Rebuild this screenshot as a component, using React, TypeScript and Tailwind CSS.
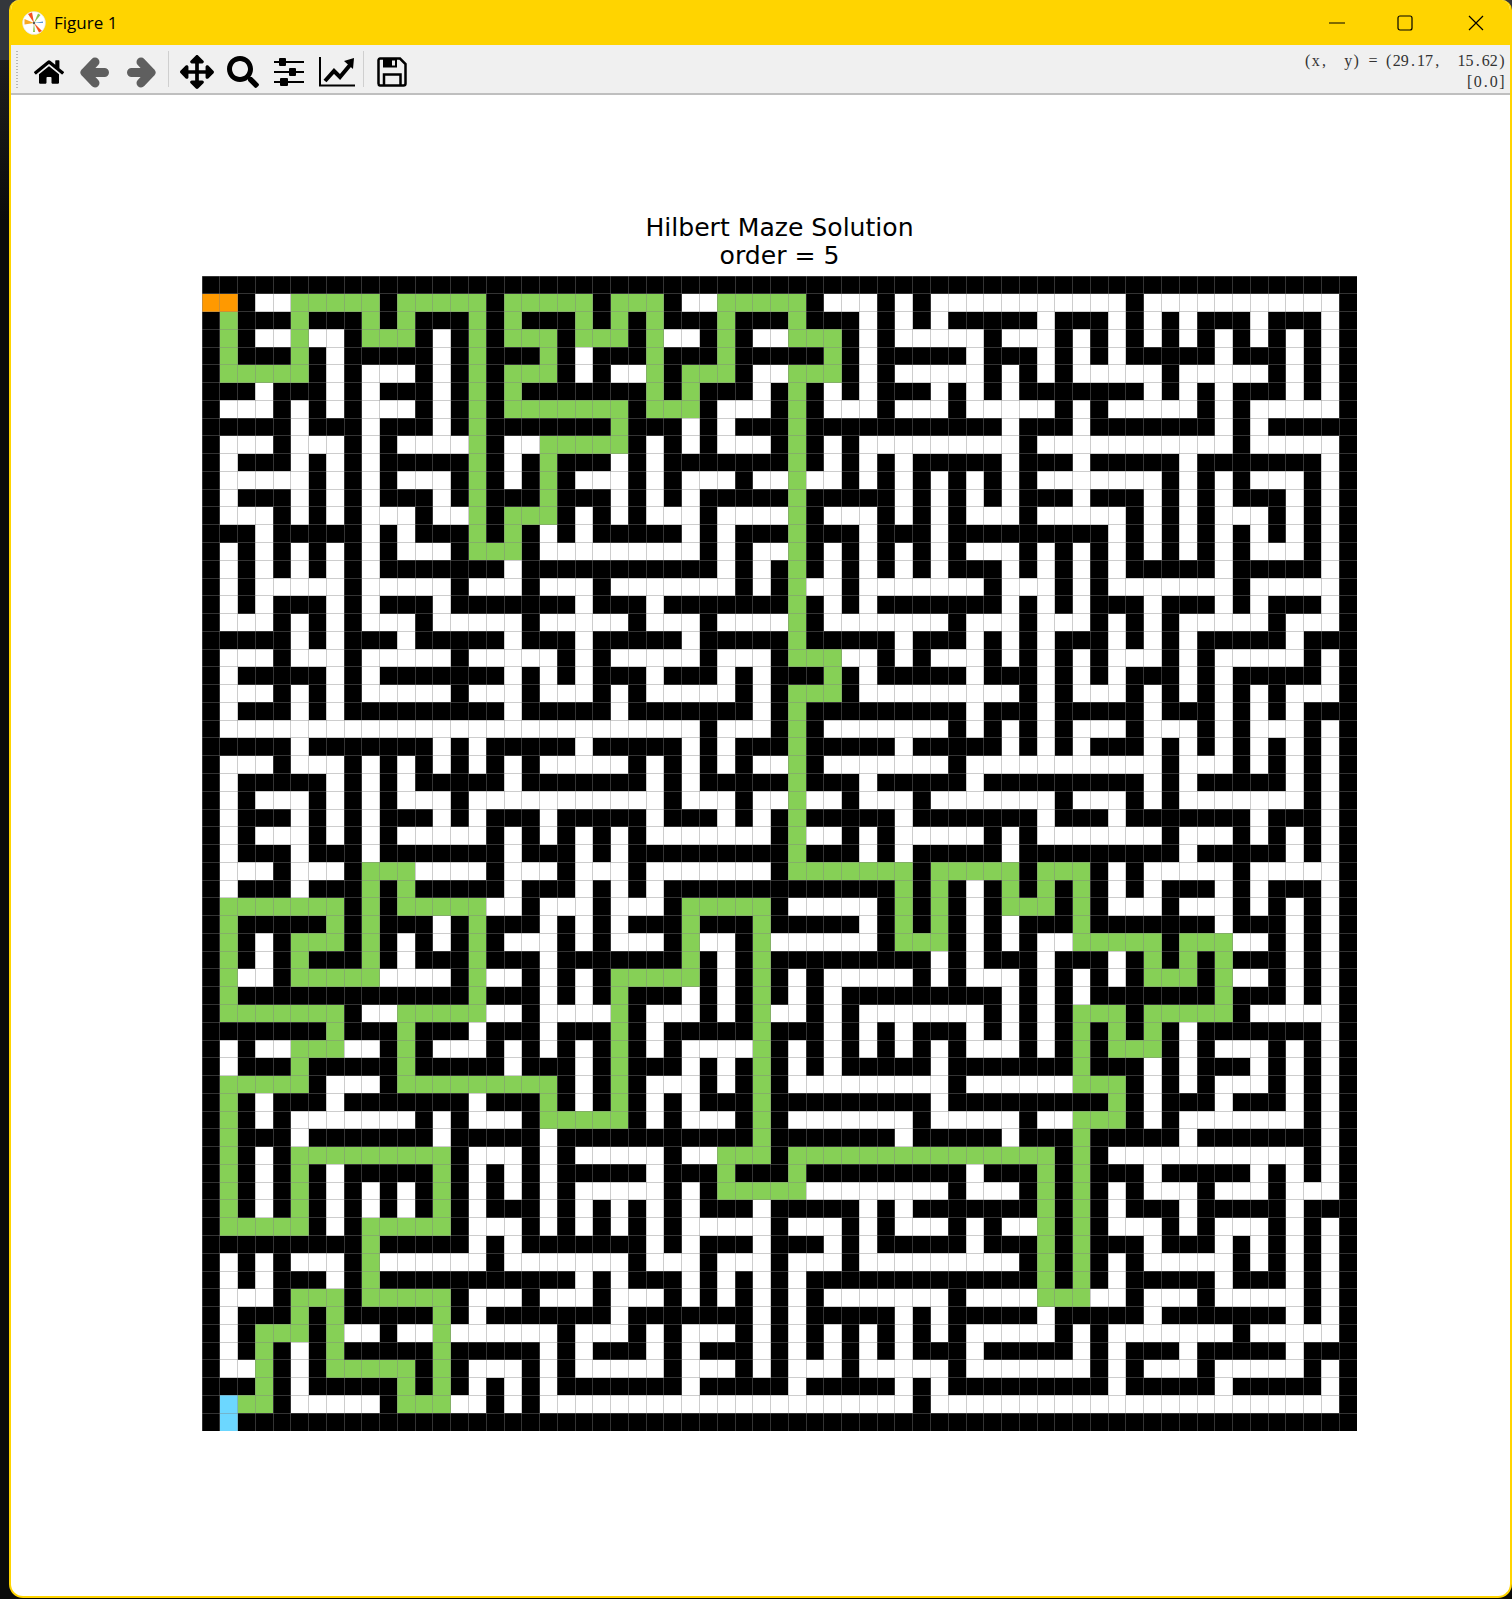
import type { ReactNode } from "react";
import { FaArrowsAlt, FaHome, FaSearch } from "react-icons/fa";

// maze cells, 65x65: # wall, . open, G solution, O start, B end
const WALL_ROW = "#".repeat(65);
const MAZE = [
  WALL_ROW,
  "OO#..GGGGG#GGGGG#GGGGG #GGG#..GGGGG#...#.#... ........#...........#",
  "#G###G###G#G###G#G###G #G#G###G###G###.#.#.## ###.###.#.#.###.###.#",
  "#G#..G..#GGG#.#G#GGG#G GG#G..#G#..GGG#.#..... #...#.#.#.#.#.#.#.#.#",
  "#G###G#.#####.#G###G#. ###G###G#####G#.#####. ###.#.#.#####.###.#.#",
  "#GGGGG#.#...#.#G#GGG#. #..G#GGG#..GGG#.#..... #.#.#.....#.....#.#.#",
  "###.###.#.###.#G#G#### ###G#G###.#G#.#.###.#. #.#######.#.#.###.#.#",
  "#...#.#.#...#.#G#GGGGG GG#GGG#...#G#...#...#. ....#.#.....#.#.....#",
  "#####.###.###.#G###### #G###.#.###G########## #.###.#######.#.#####",
  "#...#...#.#....G#..GGG GG#.#.#...#G#.#....... ..#...........#.....#",
  "#.###.#.#.#####G#.#G## #.#.#######G#.#.#.#### #.###.#####.#######.#",
  "#.....#.#.#...#G#.#G#. ..#.#...#..G..#.#.#.#. #.#.......#.#.#...#.#",
  "#.###.#.#.###.#G###G## #.#.#.#####G#####.#.#. #.###.###.#.#.###.#.#",
  "#...#.#.#...#..G#GGG#. #.#...#....G#...#.#.#. ..#.....#.#.#...#.#.#",
  "###.#####.#.###G#G#.#. #####.#.###G###.###.## #######.#.#.#.#.#.#.#",
  "#.#.#.#.#.#...#GGG#... ......#.#..G#.#.#.#.#. ..#.#.#.#.#.#.#...#.#",
  "#.#.#.#.#.#######.#### #######.#.#G#.#.#.#.## #.#.#.#.#####.#####.#",
  "#.#.....#.....#...#... #.......#.#G..#....... #...#.#.......#.....#",
  "#.#.###.#.###.#######. ###.#######G#.#.###### #.#.#.###.###.#.###.#",
  "#...#.#.#...#.....#... ..#...#....G#.......#. ..#...#.#.#.....#...#",
  "#####.#.###.#####.###. #####.#####G#####.###. #.#.###.#.#.#####.###",
  "#...#...#.....#.....#. #.....#...#GGG..#.#... #.#.#.#...#.#.....#.#",
  "#.#####.#.#######.#.#. ###.###.#.###G#.#####. ###.#.#.###.#.#####.#",
  "#...#.#.#.....#...#... #.#.....#.#GGG#....... ..#.#...#.#.#.#.#...#",
  "#.###.#.#########.#### #.#######.#G#########. ###.#####.###.#.#.###",
  "#..................... ......#...#G#.......#. #.#.#...#...#.#...#.#",
  "#####.#######.#.#####. #####.#.###G#####.#### #.#.#.###.#.#.#.#.#.#",
  "#...#...#.#.#.#.#.#... ..#.#.#.#..G#.......#. ..........#...#.#.#.#",
  "#.#####.#.#.#####.#### ###.#.#####G###.#####. #########.#.#####.#.#",
  "#.#...#.#.#...#....... ....#...#..G..#...#... ....#...#.#.......#.#",
  "#.###.#.#.###.#.###.## ###.###.#.#G#####.#### ###.###.#######.###.#",
  "#.#...#.#.#.....#.#.#. #.#.......#G..#.#..... #.#.......#...#.#.#.#",
  "#.###.###.#######.###. #.#########G###.#.#### #.#########.#####.#.#",
  "#...#...#GGG....#...#. ..#.......#GGGGGGG#GGG GG#GGG#.#.....#.....#",
  "#.###.###G#G#####.###. #.#.#############G#G#. #G#G#G#.#.###.#.###.#",
  "#GGGGGGG#G#GGGGG..#... #...#GGGGG#.....#G#G#. #GGG#G#...#...#.#.#.#",
  "#G#####G#G###.#G###.#. #.###G###G#####.#G#G#. #.###G#######.###.#.#",
  "#G#.#GGG#G#.#.#G#...#. #...#G..#G......#GGG#. #.#..GGGGG#GGG..#.#.#",
  "#G#.#G###G#.###G###.## #####G#.#G#########.#. ###.###.#G#G#G###.#.#",
  "#G..#GGGGG....#G..#.#. #GGGGG#.#G#.#.....#.#. ..#.#.#.#GGG#G..#.#.#",
  "#G#############G###.#. #G###.#.#G#.#.######## #.#.#.#######G###.#.#",
  "#GGGGGGG#..GGGGG..#... .G#...#.#G..#.#....... #.#.#GGG#GGGGG#.....#",
  "#######G###G###.###.## #G#.#####G###.#.#.###. #.#.#G#G#G#.#######.#",
  "#.#..GGG..#G#...#.#.#. #G#.#....G#.#.#.#.#.#. ..#.#G#GGG#.#...#.#.#",
  "#.###G#####G#####.###. #G###.#.#G#.#.#####.## #####G###.#.###.#.#.#",
  "#GGGGG#...#GGGGGGGGG#. #G#...#.#G#.........#. .....GGG#.#.#...#.#.#",
  "#G#.###.#######.###G#. #G#.#.###G#########.## #######G#.###.###.#.#",
  "#G#.#.......#.#...#GGG GG#.#...#G#.......#... ..#..GGG#.#.......#.#",
  "#G###.#######.#####.## #########G#######.#### #.###G#####.#######.#",
  "#G#.#GGGGGGGGG#...#.#. ....#..GGG#GGGGGGGGGGG GGGG#G#...........#.#",
  "#G#.#G#.#####G#.#.#.## ###.###G###G#########. ###G#G###.#####.#.#.#",
  "#G#.#G#.#.#.#G#.#.#.#. ....#.#GGGGG........#. ..#G#G#.#...#...#...#",
  "#G#.#G#.#.#.#G#.###.#. #.#.#.###.#####.#.#### ###G#G#.###.#####.###",
  "#GGGGG#.#GGGGG#...#.#. #.#.#.....#...#.#...#. #..G#G#...#.#...#.#.#",
  "#########G#####.#.#### ###.#.###.###.#.#####. ###G#G###.###.#.#.#.#",
  "#.#.#...#G......#..... ..#...#...#...#....... ..#G#G#.#.....#.#.#.#",
  "#.#.###.#G###########. #.###.#.#.#.########## ###G#G#.#####.###.#.#",
  "#...#GGG#GGGGG#...#... #...#.#.#.#.#.......#. ...GGG..#...#.....#.#",
  "#.###G#G#####G#.###### #.#######.#.#####.#.## ###.#####.#######.#.#",
  "#.#GGG#G..#..G......#. ..#.#...#.#.#.#.#.#.#. ....#.#.......#.....#",
  "#.#G#.#G#####G#####.#. ###.#.###.#.#.#.#.###. #####.#.###.#####.###",
  "#..G#.#GGGGG#G#...#.#. ....#...#.#...#.....#. ......#.#...#.....#.#",
  "###G#.#####G#G#.#.#.## #####.#####.#####.#.## #######.#####.#####.#",
  "#BGG#.....#GGG..#.#... ..................#... ....................#",
  "#B#################### ###################### #####################",
].map((r) => r.replace(/ /g, ""));

const CELL_COLORS: Record<string, string> = {
  "#": "#000000",
  ".": "#ffffff",
  G: "#86d056",
  O: "#ff9900",
  B: "#6cd7ff",
};

function MazeChart() {
  const rects: { x: number; y: number; w: number; c: string }[] = [];
  MAZE.forEach((row, y) => {
    let x = 0;
    while (x < row.length) {
      let end = x;
      while (end < row.length && row[end] === row[x]) end++;
      rects.push({ x, y, w: end - x, c: CELL_COLORS[row[x]] });
      x = end;
    }
  });

  let lines = "";
  for (let i = 0; i <= 65; i++) {
    lines += `M${i} 0V65M0 ${i}H65`;
  }

  return (
    <svg className="block w-[1155px] h-[1155px]" viewBox="0 0 65 65">
      {rects.map((r) => (
        <rect
          key={`${r.x}-${r.y}`}
          x={r.x}
          y={r.y}
          width={r.w}
          height={1}
          fill={r.c}
          shapeRendering="crispEdges"
        />
      ))}
      <path d={lines} stroke="#808080" strokeOpacity={0.4} strokeWidth={0.056} fill="none" shapeRendering="crispEdges" />
    </svg>
  );
}

function Logo() {
  return (
    <svg width="24" height="24" viewBox="0 0 24 24">
      <circle cx="12" cy="12" r="11.5" fill="#ffffff" stroke="#d8d8d8" strokeWidth="0.5" />
      <path d="M12 12 L6 3 L10 1.5 Z" fill="#f4511e" />
      <path d="M12 12 L20 20 L17 21.5 Z" fill="#f4511e" />
      <path d="M12 12 L2.5 8 L2.5 13.5 Z" fill="#f9a825" />
      <path d="M12 12 L16 2.5 L18.5 4 Z" fill="#8bc34a" />
      <path d="M12 12 L21 12 L21 10.5 Z" fill="#5c9bd5" />
      <path d="M12 12 L11 21 L13 21 Z" fill="#8bc34a" />
      <circle cx="12" cy="12" r="1.2" fill="#555555" />
    </svg>
  );
}

function ArrowIcon({ flip }: { flip?: boolean }) {
  return (
    <svg className={flip ? "-scale-x-100" : ""} width="30" height="31" viewBox="0 0 30 31" fill="none">
      <path
        d="M15 5L5 15.5L15 26M5 15.5H24.5"
        stroke="#5f5f5f"
        strokeWidth="9"
        strokeLinecap="round"
        strokeLinejoin="round"
      />
    </svg>
  );
}

function SlidersIcon() {
  return (
    <svg width="30" height="28" viewBox="0 0 30 28" fill="#000000">
      <rect x="0" y="3" width="30" height="2" />
      <rect x="5" y="0" width="7" height="8" rx="1" />
      <rect x="0" y="13" width="30" height="2" />
      <rect x="15" y="10" width="7" height="8" rx="1" />
      <rect x="0" y="23" width="30" height="2" />
      <rect x="6" y="20" width="8" height="8" rx="1" />
    </svg>
  );
}

function ChartIcon() {
  return (
    <svg className="ml-[3px]" width="36" height="30" viewBox="0 0 36 30" fill="none" stroke="#000000">
      <path d="M1 0V28.5H36" strokeWidth="2" />
      <path d="M6 24L15 14L21 20L31 8" strokeWidth="4" />
      <path d="M25 4L35 1L34 12Z" fill="#000000" strokeWidth="0" />
    </svg>
  );
}

function SaveIcon() {
  return (
    <svg width="30" height="30" viewBox="0 0 30 30" fill="none" stroke="#000000" strokeWidth="2.5">
      <path d="M3 1.5H23L28.5 7V26.5A2 2 0 0 1 26.5 28.5H3A2 2 0 0 1 1.5 26.5V3A2 2 0 0 1 3 1.5Z" />
      <path d="M6 2H20V10.5H6Z" fill="#000000" strokeWidth="0" />
      <path d="M15 3.5H18V8.5H15Z" fill="#f0f0f0" strokeWidth="0" />
      <path d="M7 28V17.5H23.5V28" />
    </svg>
  );
}

function ToolSlot({ children }: { children: ReactNode }) {
  return <div className="w-[46px] pt-[6px] flex items-center justify-center">{children}</div>;
}

function CoordLine({ text }: { text: string }) {
  return (
    <div className="flex justify-end">
      {text.split("").map((ch, i) => (
        <span key={i} className="w-[8.1px] text-center">
          {ch}
        </span>
      ))}
    </div>
  );
}

export default function App() {
  return (
    <div className="w-[1512px] h-[1599px] bg-[linear-gradient(#34373c_0,#34373c_60px,#1e1e1e_60px,#0a0a0a_220px)] pl-[9px] pb-px overflow-hidden">
      <div className="h-full flex flex-col bg-white border-x-2 border-b-2 border-[#ffd400] rounded-t-[10px] rounded-b-[14px] overflow-hidden">
        {/* title bar */}
        <div className="h-[45px] shrink-0 bg-[#ffd400] flex items-center pl-[11px] text-black">
          <Logo />
          <span className="ml-[8px] pt-px text-[17px] font-['Open_Sans',sans-serif]">Figure 1</span>
          <div className="ml-auto flex items-center">
            <svg className="mr-[52px]" width="16" height="2" viewBox="0 0 16 2">
              <path d="M0 1H16" stroke="#000000" strokeWidth="1" />
            </svg>
            <svg className="mr-[55px]" width="16" height="16" viewBox="0 0 16 16">
              <rect x="1" y="1" width="14" height="14" rx="2" fill="none" stroke="#000000" strokeWidth="1.2" />
            </svg>
            <svg className="mr-[26px]" width="16" height="16" viewBox="0 0 16 16">
              <path d="M1 1L15 15M15 1L1 15" stroke="#000000" strokeWidth="1.2" />
            </svg>
          </div>
        </div>

        {/* toolbar */}
        <div className="h-[50px] shrink-0 bg-[#f0f0f0] border-b-2 border-[#bfbfbf] flex items-center">
          <div className="ml-[5px] mr-[8px] flex flex-col gap-[2px]">
            {Array.from({ length: 13 }, (_, i) => (
              <div key={i} className="w-[2px] h-[1px] bg-[#b8b8b8]" />
            ))}
          </div>
          <ToolSlot>
            <FaHome size={30} color="#000000" />
          </ToolSlot>
          <ToolSlot>
            <ArrowIcon />
          </ToolSlot>
          <ToolSlot>
            <ArrowIcon flip />
          </ToolSlot>
          <div className="w-px h-[36px] bg-[#cfcfcf] ml-[4px] mr-[5px]" />
          <ToolSlot>
            <FaArrowsAlt size={34} color="#000000" />
          </ToolSlot>
          <ToolSlot>
            <FaSearch size={32} color="#000000" />
          </ToolSlot>
          <ToolSlot>
            <SlidersIcon />
          </ToolSlot>
          <ToolSlot>
            <ChartIcon />
          </ToolSlot>
          <div className="w-px h-[36px] bg-[#cfcfcf] ml-[5px] mr-[5px]" />
          <ToolSlot>
            <SaveIcon />
          </ToolSlot>
          <div className="ml-auto pr-[4px] pt-[4px] text-[16px] leading-[21px] text-[#333333] whitespace-pre font-['Liberation_Serif',serif]">
            <CoordLine text="(x,  y) = (29.17,  15.62)" />
            <CoordLine text="[0.0]" />
          </div>
        </div>

        {/* figure */}
        <div className="flex-1 pt-[119px] pl-[191px]">
          <div className="w-[1155px]">
            <div className="text-center text-[25.1px] leading-[28px] text-black font-['DejaVu_Sans',sans-serif]">
              <div>Hilbert Maze Solution</div>
              <div>order = 5</div>
            </div>
            <div className="mt-[6px]">
              <MazeChart />
            </div>
          </div>
        </div>
      </div>
    </div>
  );
}
